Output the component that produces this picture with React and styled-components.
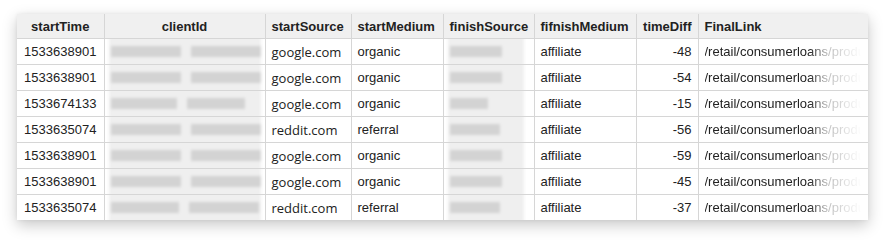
import React from "react"
import styled, { createGlobalStyle } from "styled-components"

const GlobalStyle = createGlobalStyle`
html, body {
  margin: 0;
  padding: 0;
  background: #FFFFFF;
}
`

const Page = styled.div`
padding: 14px 0 0 17px;
height: 243px;
box-sizing: border-box;
`

const Sheet = styled.table`
border-collapse: collapse;
table-layout: fixed;
width: 851px;
background: #FFFFFF;
box-shadow: 0 5px 14px rgba(0, 0, 0, 0.22), 0 0 4px rgba(0, 0, 0, 0.06);
font-family: "Liberation Sans", Arial, sans-serif;
font-size: 13px;
color: #222222;
`

const HeadCell = styled.th`
height: 24px;
padding: 0 6px;
background: #F0F0F0;
font-weight: bold;
text-align: ${p => p.align || 'left'};
border-left: 1px solid #D6D6D6;
border-bottom: 1px solid #D6D6D6;
white-space: nowrap;
overflow: hidden;
&:first-child {
  border-left: none;
}
`

const Cell = styled.td`
height: 25px;
padding: 0 6px;
text-align: ${p => p.align || 'left'};
font-family: ${p => p.wide ? '"Open Sans", "DejaVu Sans", sans-serif' : 'inherit'};
border-left: 1px solid #D6D6D6;
border-bottom: 1px solid #D6D6D6;
white-space: nowrap;
overflow: hidden;
&:first-child {
  border-left: none;
}
`

const Row = styled.tr`
&:last-child td {
  border-bottom: none;
}
`

const BlurCell = styled.td`
height: 25px;
padding: 0;
border-left: 1px solid #D6D6D6;
border-bottom: 1px solid #D6D6D6;
overflow: hidden;
`

const Smudge = styled.div`
display: flex;
align-items: center;
gap: ${p => p.gap || 10}px;
height: 29px;
margin: -2px ${p => p.right || 4}px -2px 4px;
padding: 0 2px;
background: #EFEFEF;
filter: blur(1.6px);
`

const Bar = styled.div`
height: 11px;
background: #D3D3D3;
flex: none;
`

const LinkText = styled.div`
overflow: hidden;
white-space: nowrap;
-webkit-mask-image: linear-gradient(to right, #000 0, #000 104px, rgba(0,0,0,0.3) 122px, rgba(0,0,0,0.1) 145px, transparent 156px);
mask-image: linear-gradient(to right, #000 0, #000 104px, rgba(0,0,0,0.3) 122px, rgba(0,0,0,0.1) 145px, transparent 156px);
`

const rows = [
  { t: '1533638901', id: [70, 70], src: 'google.com', med: 'organic', fin: 52, diff: '-48' },
  { t: '1533638901', id: [70, 70], src: 'google.com', med: 'organic', fin: 52, diff: '-54' },
  { t: '1533674133', id: [66, 58], src: 'google.com', med: 'organic', fin: 38, diff: '-15' },
  { t: '1533635074', id: [70, 70], src: 'reddit.com', med: 'referral', fin: 50, diff: '-56' },
  { t: '1533638901', id: [70, 70], src: 'google.com', med: 'organic', fin: 52, diff: '-59' },
  { t: '1533638901', id: [70, 70], src: 'google.com', med: 'organic', fin: 52, diff: '-45' },
  { t: '1533635074', id: [68, 70], src: 'reddit.com', med: 'referral', fin: 50, diff: '-37' },
]

const widths = [87, 161, 86, 92, 91, 102, 62, 170]

export default function App() {
  return (
    <>
      <GlobalStyle />
      <Page>
        <Sheet>
          <colgroup>
            {widths.map((w, i) => <col key={i} style={{ width: w }} />)}
          </colgroup>
          <thead>
            <tr>
              <HeadCell align="center">startTime</HeadCell>
              <HeadCell align="center">clientId</HeadCell>
              <HeadCell>startSource</HeadCell>
              <HeadCell>startMedium</HeadCell>
              <HeadCell>finishSource</HeadCell>
              <HeadCell>fifnishMedium</HeadCell>
              <HeadCell align="right">timeDiff</HeadCell>
              <HeadCell>FinalLink</HeadCell>
            </tr>
          </thead>
          <tbody>
            {rows.map((r, i) => (
              <Row key={i}>
                <Cell align="center">{r.t}</Cell>
                <BlurCell>
                  <Smudge>
                    <Bar style={{ width: r.id[0] }} />
                    <Bar style={{ width: r.id[1] }} />
                  </Smudge>
                </BlurCell>
                <Cell wide>{r.src}</Cell>
                <Cell>{r.med}</Cell>
                <BlurCell>
                  <Smudge right={10}>
                    <Bar style={{ width: r.fin }} />
                  </Smudge>
                </BlurCell>
                <Cell>affiliate</Cell>
                <Cell align="right">{r.diff}</Cell>
                <Cell>
                  <LinkText>/retail/consumerloans/produ</LinkText>
                </Cell>
              </Row>
            ))}
          </tbody>
        </Sheet>
      </Page>
    </>
  )
}
